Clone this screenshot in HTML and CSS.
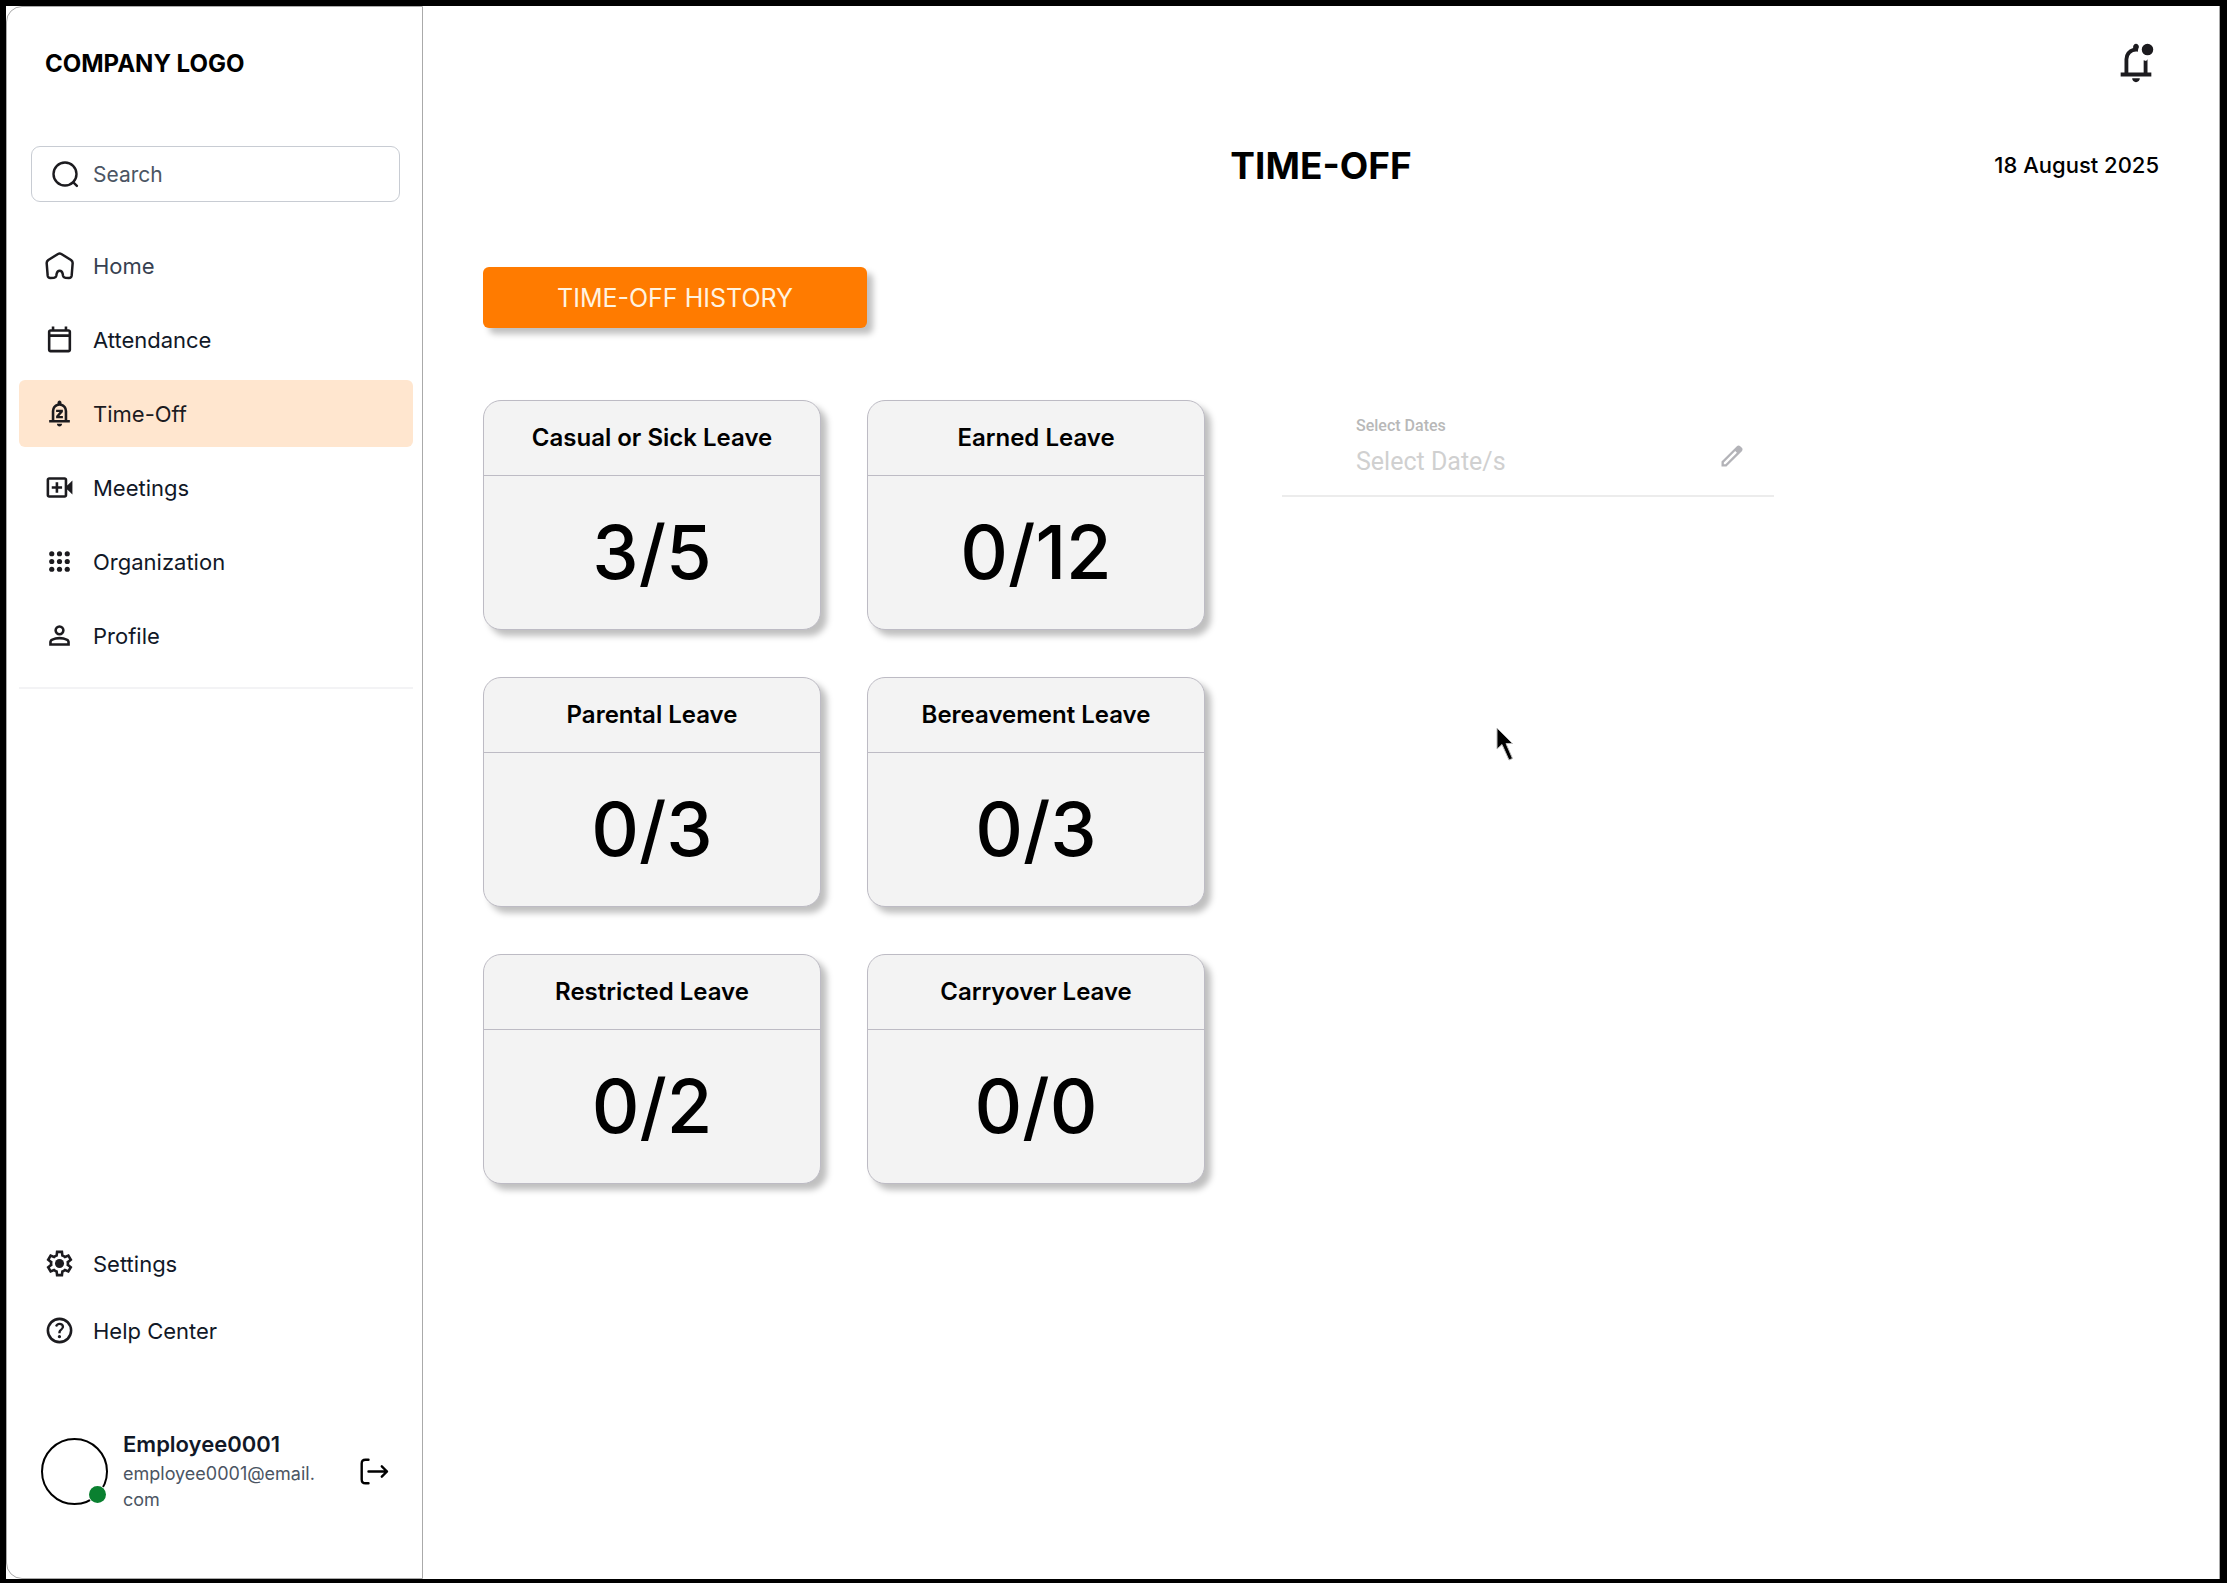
FILE: index.html
```html
<!DOCTYPE html>
<html lang="en">
<head>
    <meta charset="UTF-8">
    <meta name="viewport" content="width=device-width, initial-scale=1.0">
    <title>Time-Off</title>
    <link rel="stylesheet" href="styles.css">
</head>
<body>
    <div class="app">
        <aside class="sidebar">
            <div class="logo">COMPANY LOGO</div>

            <label class="search">
                <svg class="icon line" viewBox="0 0 31 31" stroke-width="2.4">
                    <circle cx="15" cy="15" r="11.5"/>
                    <path d="M23.3 23.3l3.6 3.6"/>
                </svg>
                <input type="text" placeholder="Search" aria-label="Search">
            </label>

            <nav class="menu">
                <a class="menu-item muted" href="#">
                    <svg class="icon line" viewBox="0 0 93 93" stroke-width="7.5">
                        <path d="M42 12 L13 30 Q8 34 8 39 L11 77 Q12 84 19 84 L30 83 Q36 82 37 77 L38 71 Q40 62 47 62 Q54 62 56 71 L57 77 Q58 82 64 83 L75 84 Q82 84 83 77 L86 39 Q86 34 81 30 L52 12 Q47 9 42 12 Z"/>
                    </svg>
                    Home
                </a>
                <a class="menu-item" href="#">
                    <svg class="icon" viewBox="0 -960 960 960"><path d="M200-80q-33 0-56.5-23.5T120-160v-560q0-33 23.5-56.5T200-800h40v-80h80v80h320v-80h80v80h40q33 0 56.5 23.5T840-720v560q0 33-23.5 56.5T760-80H200Zm0-80h560v-400H200v400Zm0-480h560v-80H200v80Z"/></svg>
                    Attendance
                </a>
                <a class="menu-item active" href="#">
                    <svg class="icon" viewBox="0 -960 960 960"><path d="M160-200v-80h80v-280q0-83 50-147.5T420-792v-28q0-25 17.5-42.5T480-880t42.5 17.5Q540-845 540-820v28q80 20 130 84.5T720-560v280h80v80H160Zm320 120q-33 0-56.5-23.5T400-160h160q0 33-23.5 56.5T480-80ZM320-280h320v-280q0-66-47-113t-113-47q-66 0-113 47t-47 113v280Z"/><path d="M375-330h210v-75H475l110-125v-70H375v75h106L375-402Z"/></svg>
                    Time-Off
                </a>
                <a class="menu-item" href="#">
                    <svg class="icon" viewBox="0 -960 960 960"><path d="M160-160q-33 0-56.5-23.5T80-240v-480q0-33 23.5-56.5T160-800h480q33 0 56.5 23.5T720-720v180l160-160v440L720-420v180q0 33-23.5 56.5T640-160H160Zm0-80h480v-480H160v480Zm200-80h80v-120h120v-80H440v-120h-80v120H240v80h120v120Z"/></svg>
                    Meetings
                </a>
                <a class="menu-item" href="#">
                    <svg class="icon" viewBox="0 0 24 24">
                        <circle cx="6" cy="6" r="2"/><circle cx="12" cy="6" r="2"/><circle cx="18" cy="6" r="2"/>
                        <circle cx="6" cy="12" r="2"/><circle cx="12" cy="12" r="2"/><circle cx="18" cy="12" r="2"/>
                        <circle cx="6" cy="18" r="2"/><circle cx="12" cy="18" r="2"/><circle cx="18" cy="18" r="2"/>
                    </svg>
                    Organization
                </a>
                <a class="menu-item" href="#">
                    <svg class="icon" viewBox="0 -960 960 960"><path d="M480-480q-66 0-113-47t-47-113q0-66 47-113t113-47q66 0 113 47t47 113q0 66-47 113t-113 47ZM160-160v-112q0-34 17.5-62.5T224-378q62-31 126-46.5T480-440q66 0 130 15.5T736-378q29 15 46.5 43.5T800-272v112H160Zm80-80h480v-32q0-11-5.5-20T700-306q-54-27-109-40.5T480-360q-56 0-111 13.5T260-306q-9 5-14.5 14t-5.5 20v32Zm240-320q33 0 56.5-23.5T560-640q0-33-23.5-56.5T480-720q-33 0-56.5 23.5T400-640q0 33 23.5 56.5T480-560Z"/></svg>
                    Profile
                </a>
            </nav>

            <div class="menu-bottom">
                <a class="menu-item" href="#">
                    <svg class="icon" viewBox="0 -960 960 960"><path d="m370-80-16-128q-13-5-24.5-12T307-235l-119 50L78-375l103-78q-1-7-1-13.5v-27q0-6.5 1-13.5L78-585l110-190 119 50q11-8 23-15t24-12l16-128h220l16 128q13 5 24.5 12t22.5 15l119-50 110 190-103 78q1 7 1 13.5v27q0 6.5-2 13.5l103 78-110 190-118-50q-11 8-23 15t-24 12L590-80H370Zm70-80h79l14-106q31-8 57.5-23.5T639-327l99 41 39-68-86-65q5-14 7-29.5t2-31.5q0-16-2-31.5t-7-29.5l86-65-39-68-99 42q-22-23-48.5-38.5T533-694l-13-106h-79l-14 106q-31 8-57.5 23.5T321-633l-99-41-39 68 86 64q-5 15-7 30t-2 32q0 16 2 31t7 30l-86 65 39 68 99-42q22 23 48.5 38.5T427-266l13 106Z"/><circle cx="480" cy="-480" r="140"/></svg>
                    Settings
                </a>
                <a class="menu-item" href="#">
                    <svg class="icon" viewBox="0 -960 960 960"><path d="M478-240q21 0 35.5-14.5T528-290q0-21-14.5-35.5T478-340q-21 0-35.5 14.5T428-290q0 21 14.5 35.5T478-240Zm-36-154h74q0-33 7.5-52t42.5-52q26-26 41-49.5t15-56.5q0-56-41-86t-97-30q-57 0-92.5 30T342-618l66 26q5-18 22.5-39t53.5-21q32 0 48 17.5t16 38.5q0 20-12 37.5T506-526q-44 39-54 59t-10 73Zm38 314q-83 0-156-31.5T197-197q-54-54-85.5-127T80-480q0-83 31.5-156T197-763q54-54 127-85.5T480-880q83 0 156 31.5T763-763q54 54 85.5 127T880-480q0 83-31.5 156T763-197q-54 54-127 85.5T480-80Zm0-80q134 0 227-93t93-227q0-134-93-227t-227-93q-134 0-227 93t-93 227q0 134 93 227t227 93Z"/></svg>
                    Help Center
                </a>
            </div>

            <div class="user">
                <div class="avatar"><span class="status"></span></div>
                <div class="user-info">
                    <div class="user-name">Employee0001</div>
                    <div class="user-email">employee0001@email.<wbr>com</div>
                </div>
                <button class="icon-button" aria-label="Log out">
                    <svg class="icon line black" viewBox="0 0 31 31" stroke-width="2.4">
                        <path d="M9.5 3.8H6.5Q2.7 3.8 2.7 7.6V23.4Q2.7 27.2 6.5 27.2H9.5"/>
                        <path d="M9.5 15.5H28M22.8 10.3L28 15.5L22.8 20.7"/>
                    </svg>
                </button>
            </div>
        </aside>

        <main class="main">
            <div class="topbar">
                <button class="icon-button" aria-label="Notifications">
                    <svg class="bell" viewBox="0 -960 960 960"><path d="M480-80q-33 0-56.5-23.5T400-160h160q0 33-23.5 56.5T480-80ZM160-200v-80h80v-280q0-83 50-147.5T420-792v-28q0-25 17.5-42.5T480-880q25 0 42.5 17.5T540-820v13q-10 20-15 42t-5 45v6q-10-2-20-4t-20-2q-66 0-113 47t-47 113v280h320v-257q18 8 38.5 12.5T720-560v280h80v80H160Zm560-440q-50 0-85-35t-35-85q0-50 35-85t85-35q50 0 85 35t35 85q0 50-35 85t-85 35Z"/></svg>
                </button>
            </div>

            <div class="page-header">
                <h1>TIME-OFF</h1>
                <span class="date">18 August 2025</span>
            </div>

            <button class="history">TIME-OFF HISTORY</button>

            <div class="content">
                <div class="cards">
                    <section class="card">
                        <h2>Casual or Sick Leave</h2>
                        <p>3/5</p>
                    </section>
                    <section class="card">
                        <h2>Earned Leave</h2>
                        <p>0/12</p>
                    </section>
                    <section class="card">
                        <h2>Parental Leave</h2>
                        <p>0/3</p>
                    </section>
                    <section class="card">
                        <h2>Bereavement Leave</h2>
                        <p>0/3</p>
                    </section>
                    <section class="card">
                        <h2>Restricted Leave</h2>
                        <p>0/2</p>
                    </section>
                    <section class="card">
                        <h2>Carryover Leave</h2>
                        <p>0/0</p>
                    </section>
                </div>

                <div class="picker">
                    <div class="picker-field">
                        <label for="dates">Select Dates</label>
                        <input type="text" id="dates" placeholder="Select Date/s">
                    </div>
                    <button class="icon-button edit" aria-label="Edit dates">
                        <svg class="pencil" viewBox="0 -960 960 960"><path d="M200-200h57l391-391-57-57-391 391v57Zm-80 80v-170l528-527q12-11 26.5-17t30.5-6q16 0 31 6t26 18l55 56q12 11 17.5 26t5.5 30q0 16-5.5 30.5T817-647L290-120H120Z"/></svg>
                    </button>
                </div>
            </div>

            <svg class="cursor" viewBox="0 0 20 36">
                <path d="M1 1V22L6 17.5L13 33L16.5 31.5L10 16.5H16.5Z" fill="#000" stroke="#bbb" stroke-width="1"/>
            </svg>
        </main>
    </div>
</body>
</html>
```

FILE: styles.css
```css
* {
    box-sizing: border-box;
}
body {
    margin: 0;
    padding: 6px 7px 4px 6px;
    background: #000;
    color: #000;
    font-family: Inter, "Liberation Sans", sans-serif;
}
h1, h2, p {
    margin: 0;
}
a {
    color: inherit;
    text-decoration: none;
}
input {
    width: 100%;
    min-width: 0;
    padding: 0;
    border: none;
    outline: none;
    background: transparent;
    font: inherit;
}
.app {
    display: flex;
    min-height: calc(100vh - 10px);
    background: #fff;
}
.icon {
    flex: none;
    width: 31px;
    height: 31px;
    fill: #1c1b1f;
}
.icon.line {
    fill: none;
    stroke: #1c1b1f;
    stroke-linecap: round;
    stroke-linejoin: round;
}
.icon.black {
    stroke: #000;
}
.icon-button {
    display: flex;
    padding: 0;
    border: none;
    background: none;
    cursor: pointer;
}

/* sidebar */
.sidebar {
    display: flex;
    flex-direction: column;
    flex: none;
    width: 417px;
    padding: 42px 9px 65px 12px;
    border: 1px solid #aaa;
    border-radius: 16px 0 0 16px;
}
.logo {
    padding-left: 26px;
    font-size: 24px;
    line-height: 30px;
    font-weight: 700;
}
.search {
    display: flex;
    align-items: center;
    gap: 12px;
    height: 56px;
    margin: 67px 13px 30px 12px;
    padding: 0 18px;
    border: 1px solid #c8ccd3;
    border-radius: 9px;
    font-size: 21px;
}
.search input::placeholder {
    color: #4b5563;
    opacity: 1;
}
.menu {
    display: flex;
    flex-direction: column;
    gap: 7px;
    padding-bottom: 18px;
    border-bottom: 2px solid #f3f3f5;
}
.menu-item {
    display: flex;
    align-items: center;
    gap: 18px;
    height: 67px;
    padding: 0 25px;
    border-radius: 6px;
    color: #111827;
    font-size: 22px;
}
.menu-item.muted {
    color: #374151;
}
.menu-item.active {
    background: #ffe6cf;
    color: #1c1b1f;
}
.menu-bottom {
    margin-top: auto;
    padding-bottom: 66px;
}
.user {
    display: flex;
    align-items: center;
    padding: 0 23px 0 22px;
}
.avatar {
    position: relative;
    flex: none;
    width: 67px;
    height: 67px;
    border: 2px solid #000;
    border-radius: 50%;
}
.status {
    position: absolute;
    right: 0;
    bottom: 0;
    width: 17px;
    height: 17px;
    border-radius: 50%;
    background: #0a8030;
    box-shadow: 0 0 0 1px #fff;
}
.user-info {
    flex: 1;
    padding: 0 30px 0 15px;
}
.user-name {
    margin-bottom: 2px;
    color: #111827;
    font-size: 22px;
    line-height: 29px;
    font-weight: 600;
}
.user-email {
    color: #4b5563;
    font-size: 18px;
    line-height: 26px;
}

/* main area */
.main {
    position: relative;
    flex: 1;
    padding: 34px 60px 60px;
    border-right: 1px solid #aaa;
}
.topbar {
    display: flex;
    justify-content: flex-end;
}
.bell {
    width: 46px;
    height: 46px;
    fill: #1c1b1f;
}
.page-header {
    display: grid;
    grid-template-columns: 1fr auto 1fr;
    align-items: center;
    height: 60px;
    margin: 49px 0 72px;
}
.page-header h1 {
    grid-column: 2;
    font-size: 37px;
    font-weight: 700;
}
.date {
    justify-self: end;
    font-size: 22px;
    font-weight: 500;
}
.history {
    width: 384px;
    height: 61px;
    border: none;
    border-radius: 6px;
    background: #ff7b00;
    box-shadow: 6px 6px 6px rgba(0, 0, 0, 0.25);
    color: #fff3e0;
    font-family: inherit;
    font-size: 25px;
    cursor: pointer;
}
.content {
    display: flex;
    align-items: flex-start;
    gap: 77px;
    margin-top: 72px;
}
.cards {
    display: grid;
    grid-template-columns: repeat(2, 338px);
    gap: 47px 46px;
}
.card {
    border: 1px solid #bdbbc4;
    border-radius: 18px;
    background: #f3f3f3;
    box-shadow: 6px 6px 6px rgba(0, 0, 0, 0.25);
    text-align: center;
}
.card h2 {
    border-bottom: 1px solid #bdbbc4;
    font-size: 24px;
    line-height: 74px;
    font-weight: 600;
}
.card p {
    font-size: 74px;
    line-height: 153px;
    font-weight: 500;
}
.picker {
    display: flex;
    align-items: center;
    justify-content: space-between;
    width: 492px;
    height: 97px;
    padding: 0 28px 0 74px;
    border-bottom: 2px solid #ececec;
    font-family: Roboto, "Liberation Sans", sans-serif;
}
.picker-field {
    display: flex;
    flex-direction: column;
    gap: 8px;
}
.picker label {
    color: #b8b8b8;
    font-size: 16px;
    line-height: 20px;
    font-weight: 500;
}
.picker input {
    height: 36px;
    color: #333;
    font-size: 25px;
}
.picker input::placeholder {
    color: #d0d0d0;
    opacity: 1;
}
.edit {
    margin-top: 16px;
}
.pencil {
    width: 28px;
    height: 28px;
    fill: #b3b3b8;
}
.cursor {
    position: absolute;
    left: 1073px;
    top: 721px;
    width: 20px;
    height: 36px;
}
```
